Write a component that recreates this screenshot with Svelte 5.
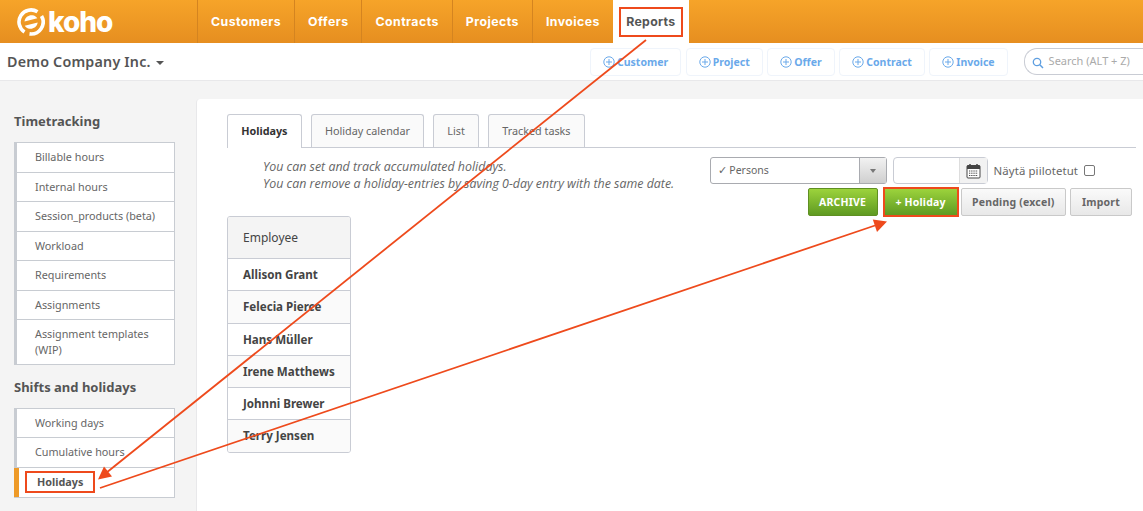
<script lang="ts">
  const navItems = ["Customers", "Offers", "Contracts", "Projects", "Invoices"];
  const quickAdd = ["Customer", "Project", "Offer", "Contract", "Invoice"];
  const timetracking = [
    "Billable hours",
    "Internal hours",
    "Session_products (beta)",
    "Workload",
    "Requirements",
    "Assignments",
    "Assignment templates (WIP)",
  ];
  const shifts = ["Working days", "Cumulative hours"];
  const tabs = ["Holiday calendar", "List", "Tracked tasks"];
  const employees = [
    "Allison Grant",
    "Felecia Pierce",
    "Hans Müller",
    "Irene Matthews",
    "Johnni Brewer",
    "Terry Jensen",
  ];
</script>

<div class="page">
  <header class="topbar">
    <div class="logo">
      <svg width="28" height="28" viewBox="0 0 28 28" aria-hidden="true">
        <path d="M20.500 3.800A12 12 0 0 0 7.500 24" fill="none" stroke="#fff" stroke-width="3.600" />
        <path d="M12.500 25.900A12 12 0 0 0 24.500 8" fill="none" stroke="#fff" stroke-width="3.600" />
        <path d="M7.500 13.500C8 9 12 6.800 15.500 7.300c2 .3 3.800 1.400 4.800 3z" fill="#fff" />
        <path d="M20.700 14.500C20 19 16 21.200 12.500 20.700c-2-.3-3.800-1.400-4.800-3z" fill="#fff" />
      </svg>
      <span>koho</span>
    </div>
    <nav class="mainnav">
      {#each navItems as item}
        <span class="navitem">{item}</span>
      {/each}
      <span class="navitem active"><b>Reports</b></span>
    </nav>
  </header>

  <div class="subbar">
    <div class="company">Demo Company Inc. <i class="caret"></i></div>
    <div class="quick">
      {#each quickAdd as item}
        <span class="quickbtn">
          <svg width="12" height="12" viewBox="0 0 12 12" aria-hidden="true">
            <circle cx="6" cy="6" r="5.200" fill="none" stroke="#6aa9ea" />
            <path d="M6 3v6M3 6h6" stroke="#6aa9ea" />
          </svg>
          {item}
        </span>
      {/each}
    </div>
    <div class="search">
      <svg width="12" height="12" viewBox="0 0 12 12" aria-hidden="true">
        <circle cx="5" cy="5" r="3.700" fill="none" stroke="#5f9fe0" stroke-width="1.300" />
        <path d="M7.800 7.800l3.200 3.200" stroke="#5f9fe0" stroke-width="1.500" />
      </svg>
      <span>Search (ALT + Z)</span>
    </div>
  </div>

  <div class="body">
    <aside class="sidebar">
      <h3>Timetracking</h3>
      <ul>
        {#each timetracking as item}
          <li>{item}</li>
        {/each}
      </ul>
      <h3 class="second">Shifts and holidays</h3>
      <ul>
        {#each shifts as item}
          <li>{item}</li>
        {/each}
        <li class="current"><b>Holidays</b></li>
      </ul>
    </aside>

    <main class="panel">
      <div class="tabs">
        <span class="tab active">Holidays</span>
        {#each tabs as tab}
          <span class="tab">{tab}</span>
        {/each}
      </div>

      <div class="controls">
        <p class="hint">
          You can set and track accumulated holidays.<br />
          You can remove a holiday-entries by saving 0-day entry with the same date.
        </p>
        <div class="tools">
          <div class="filters">
            <div class="select">
              <span>✓ Persons</span>
              <i class="selectarrow"></i>
            </div>
            <div class="date">
              <span class="dateicon">
                <svg width="15" height="16" viewBox="0 0 15 16" aria-hidden="true">
                  <rect x="1" y="2.500" width="13" height="12.500" rx="1" fill="#fff" stroke="#444" />
                  <rect x="1" y="2.500" width="13" height="3.500" fill="#444" />
                  <path d="M4 1v3M11 1v3" stroke="#444" stroke-width="1.500" />
                  <path d="M3 8h9M3 10.200h9M3 12.500h9" stroke="#444" stroke-dasharray="1.300 .9" />
                </svg>
              </span>
            </div>
            <label class="hidden-toggle">Näytä piilotetut <span class="check"></span></label>
          </div>
          <div class="actions">
            <span class="btn green archive">ARCHIVE</span>
            <span class="framed"><span class="btn green">+ Holiday</span></span>
            <span class="btn">Pending (excel)</span>
            <span class="btn">Import</span>
          </div>
        </div>
      </div>

      <div class="employees">
        <div class="emphead">Employee</div>
        {#each employees as name}
          <div class="emprow">{name}</div>
        {/each}
      </div>
    </main>
  </div>

  <svg class="arrows" width="1143" height="511" viewBox="0 0 1143 511" aria-hidden="true">
    <path d="M646 40L106 473" stroke="#ee4a1c" stroke-width="1.800" fill="none" />
    <path d="M98 479.500L104 466.500L112 476.500z" fill="#ee4a1c" />
    <path d="M100 488L875 225.500" stroke="#ee4a1c" stroke-width="1.800" fill="none" />
    <path d="M887 221.500L877 232L872.800 219.500z" fill="#ee4a1c" />
  </svg>
</div>

<style>
  :global(body) {
    margin: 0;
    background: #f4f4f4;
  }

  .page {
    position: relative;
    width: 1143px;
    height: 511px;
    overflow: hidden;
    font-family: "Noto Sans", "Open Sans", sans-serif;
    font-size: 11px;
    color: #555;
  }

  .topbar {
    display: flex;
    height: 43px;
    background: linear-gradient(180deg, #f6a429 0%, #e68e20 100%);
  }

  .logo {
    display: flex;
    align-items: center;
    gap: 3px;
    width: 197px;
    padding-left: 17px;
    box-sizing: border-box;
    color: #fff;
    font-family: "Inter", sans-serif;
    font-size: 28px;
    font-weight: 800;
    letter-spacing: -1px;
  }

  .mainnav {
    display: flex;
    height: 43px;
  }

  .navitem {
    display: flex;
    align-items: center;
    padding: 0 13px;
    border-left: 1px solid #d48420;
    color: #fff;
    font-family: "Inter", sans-serif;
    font-size: 12.300px;
    font-weight: 700;
    letter-spacing: 0.45px;
  }

  .navitem.active {
    padding: 0 6px;
    border-left: 0;
    background: #fff;
    color: #555;
  }

  .navitem.active b {
    width: 64px;
    box-sizing: border-box;
    text-align: center;
    line-height: 26px;
    border: 2px solid #ee4a1c;
    font-weight: 700;
    letter-spacing: 0.3px;
  }

  .subbar {
    display: flex;
    align-items: center;
    height: 37px;
    background: #fff;
    border-bottom: 1px solid #e8e8ea;
    padding-left: 7px;
  }

  .company {
    flex: none;
    width: 583px;
    font-size: 14.300px;
    font-weight: 600;
    letter-spacing: 0.2px;
    color: #555;
  }

  .caret {
    display: inline-block;
    margin-left: 1px;
    vertical-align: middle;
    border-style: solid;
    border-width: 4px 4px 0;
    border-color: #555 transparent transparent;
  }

  .quick {
    display: flex;
    flex: none;
    gap: 4.600px;
  }

  .quickbtn {
    display: flex;
    align-items: center;
    gap: 2px;
    height: 26px;
    padding: 0 12px 0 12px;
    border: 1px solid #eff4fb;
    border-radius: 4px;
    color: #6aa9ea;
    font-weight: 700;
    font-size: 10.500px;
  }

  .search {
    display: flex;
    align-items: center;
    gap: 5px;
    flex: none;
    width: 125px;
    height: 27px;
    margin-left: 16px;
    padding-left: 7px;
    border: 1px solid #c9ccd4;
    border-right: 0;
    border-radius: 13px 0 0 13px;
    color: #aaa;
    font-size: 11px;
    box-sizing: border-box;
  }

  .search span {
    margin-top: -2px;
  }

  .search svg {
    margin-top: 3px;
  }

  .body {
    display: flex;
    height: 431px;
    padding-top: 18px;
  }

  .sidebar {
    flex: none;
    width: 196px;
    box-sizing: border-box;
    padding: 12px 0 0 14px;
  }

  .sidebar h3 {
    margin: 0 0 11px;
    line-height: 20px;
    font-size: 13px;
    font-weight: 700;
    color: #555;
  }

  .sidebar h3.second {
    margin-top: 11.500px;
  }

  .sidebar ul {
    width: 161px;
    box-sizing: border-box;
    margin: 0;
    padding: 0;
    list-style: none;
    background: #fff;
    border: 1px solid #c8ccd2;
    border-left: 0;
  }

  .sidebar li {
    padding: 6px 10px 7px 18px;
    line-height: 15.500px;
    font-size: 10.800px;
    color: #666;
    border-left: 3px solid #c8ccd2;
    border-bottom: 1px solid #c8ccd2;
  }

  .sidebar li:last-child {
    border-bottom: 0;
  }

  .sidebar li.current {
    padding: 3px 0 4px 6px;
    border-left: 5px solid #ee9a28;
    color: #555;
  }

  .sidebar li.current b {
    display: block;
    width: 70px;
    box-sizing: border-box;
    padding: 2px 10px;
    line-height: 14px;
    border: 2px solid #ee4a1c;
    font-weight: 700;
  }

  .panel {
    flex: 1;
    background: #fff;
    border-left: 1px solid #e8e8ea;
    border-radius: 4px 0 0 0;
    padding: 15px 7px 0 30px;
    min-width: 0;
  }

  .tabs {
    display: flex;
    gap: 9px;
    height: 33px;
    border-bottom: 1px solid #c9ccd4;
  }

  .tab {
    display: flex;
    align-items: center;
    padding: 0 13.200px 2px;
    height: 33px;
    box-sizing: border-box;
    border: 1px solid #c9ccd4;
    border-bottom: 0;
    border-radius: 3px 3px 0 0;
    background: #fafafa;
    color: #666;
    font-size: 10.800px;
  }

  .tab.active {
    height: 34px;
    background: #fff;
    color: #333;
    font-weight: 700;
  }

  .controls {
    display: flex;
    justify-content: space-between;
  }

  .hint {
    margin: 10px 0 0 36px;
    font-family: "Open Sans", sans-serif;
    font-size: 12.400px;
    font-style: italic;
    line-height: 17px;
    color: #666;
  }

  .tools {
    display: flex;
    flex-direction: column;
    align-items: flex-end;
    gap: 3px;
    padding-top: 9px;
  }

  .filters {
    display: flex;
    align-items: center;
    height: 27px;
    margin-right: 41px;
  }

  .select {
    display: flex;
    align-items: center;
    justify-content: space-between;
    width: 177px;
    height: 27px;
    box-sizing: border-box;
    padding-left: 7px;
    border: 1px solid #a9abb0;
    border-radius: 3px;
    color: #666;
    font-size: 10.500px;
  }

  .select span {
    margin-top: -2px;
  }

  .selectarrow {
    display: flex;
    align-items: center;
    justify-content: center;
    width: 26px;
    height: 25px;
    border-left: 1px solid #a9abb0;
    background: linear-gradient(180deg, #f2f2f2, #cfcfcf);
  }

  .selectarrow::after {
    content: "";
    border-style: solid;
    border-width: 4px 3px 0;
    border-color: #777 transparent transparent;
  }

  .date {
    display: flex;
    justify-content: flex-end;
    width: 95px;
    height: 27px;
    box-sizing: border-box;
    margin-left: 6px;
    border: 1px solid #c9ccd4;
    border-radius: 4px;
  }

  .dateicon {
    display: flex;
    align-items: center;
    justify-content: center;
    width: 27px;
    background: #f2f2f2;
    border-left: 1px solid #ddd;
  }

  .hidden-toggle {
    display: flex;
    align-items: center;
    gap: 6px;
    margin-left: 6px;
    color: #666;
    font-size: 11.400px;
    letter-spacing: 0.1px;
  }

  .check {
    width: 9px;
    height: 9px;
    border: 1px solid #777;
    border-radius: 2px;
    background: #fff;
  }

  .actions {
    display: flex;
    align-items: center;
    gap: 4px;
    margin-right: 4px;
  }

  .btn {
    display: flex;
    align-items: center;
    justify-content: center;
    height: 28px;
    box-sizing: border-box;
    padding: 0 10.500px;
    border: 1px solid #c9c9c9;
    border-radius: 2px;
    background: linear-gradient(180deg, #fafafa, #e8e8e8);
    color: #666;
    font-size: 10.500px;
    font-weight: 700;
    letter-spacing: 0.2px;
  }

  .btn:last-child {
    width: 62px;
    padding: 0;
  }

  .btn.green {
    border-color: #5f8f22;
    background: linear-gradient(180deg, #9cd33c, #5f9a22);
    color: #fff;
  }

  .btn.archive {
    width: 70px;
    padding: 0;
  }

  .framed {
    display: flex;
    margin: 0 -2px 0 1px;
    border: 2px solid #ee4a1c;
  }

  .framed .btn {
    border: 0;
    border-radius: 0;
    width: 72px;
    height: 26px;
    padding: 0;
  }

  .employees {
    width: 124px;
    box-sizing: border-box;
    margin-top: -1px;
    border: 1px solid #c9ccd4;
    border-radius: 3px;
    overflow: hidden;
  }

  .emphead {
    padding-left: 15px;
    line-height: 41px;
    background: #f4f4f4;
    color: #444;
    font-size: 12px;
  }

  .emprow {
    padding-left: 15px;
    line-height: 31.300px;
    border-top: 1px solid #c9ccd4;
    color: #444;
    font-size: 11.600px;
    font-weight: 700;
    background: #fff;
  }

  .emprow:nth-child(odd) {
    background: #fafafa;
  }

  .arrows {
    position: absolute;
    inset: 0;
    pointer-events: none;
  }
</style>
